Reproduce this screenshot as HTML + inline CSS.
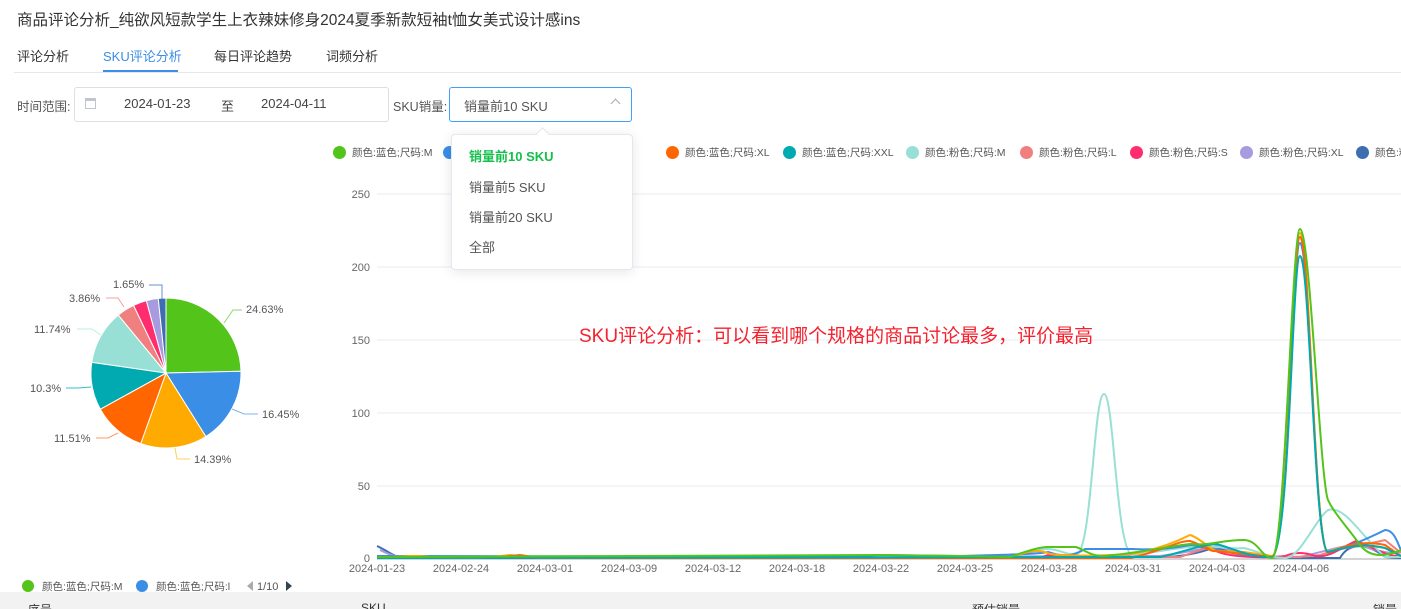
<!DOCTYPE html>
<html><head><meta charset="utf-8"><style>
*{margin:0;padding:0;box-sizing:border-box}
html,body{width:1401px;height:609px;overflow:hidden}
body{background:#fff;font-family:"Liberation Sans","Noto Sans CJK SC",sans-serif;color:#333;position:relative}
.a{position:absolute;white-space:nowrap}
.lg{position:absolute;top:145px;font-size:10.5px;color:#555;display:flex;align-items:center;white-space:nowrap}
.lg i{display:inline-block;width:13px;height:13px;border-radius:50%;margin-right:6px;flex:none}
</style></head><body>
<div class="a" style="left:17px;top:8px;font-size:15.5px;color:#333">商品评论分析_纯欲风短款学生上衣辣妹修身2024夏季新款短袖t恤女美式设计感ins</div>
<div class="a" style="left:17px;top:46px;font-size:13px;color:#333">评论分析</div>
<div class="a" style="left:103px;top:46px;font-size:13px;color:#3a8ee6">SKU评论分析</div>
<div class="a" style="left:214px;top:46px;font-size:13px;color:#333">每日评论趋势</div>
<div class="a" style="left:326px;top:46px;font-size:13px;color:#333">词频分析</div>
<div class="a" style="left:14px;top:72px;width:1387px;height:1px;background:#e4e7ed"></div>
<div class="a" style="left:103px;top:70px;width:75px;height:2px;background:#3a8ee6"></div>

<div class="a" style="left:17px;top:96px;font-size:12.5px;color:#555">时间范围:</div>
<div class="a" style="left:74px;top:87px;width:315px;height:35px;border:1px solid #dcdfe6;border-radius:3px"></div>
<div class="a" style="left:85px;top:98px;width:11px;height:11px;border:1px solid #c0c4cc;border-top-width:3px"></div>
<div class="a" style="left:124px;top:96px;font-size:13px;color:#444">2024-01-23</div>
<div class="a" style="left:221px;top:96px;font-size:13px;color:#444">至</div>
<div class="a" style="left:261px;top:96px;font-size:13px;color:#444">2024-04-11</div>
<div class="a" style="left:393px;top:96px;font-size:12.5px;color:#555">SKU销量:</div>
<div class="a" style="left:449px;top:87px;width:183px;height:35px;border:1px solid #409eff;border-radius:3px"></div>
<div class="a" style="left:464px;top:96px;font-size:13px;color:#555">销量前10 SKU</div>
<div class="a" style="left:612px;top:100px;width:7px;height:7px;border-left:1px solid #aaa;border-top:1px solid #aaa;transform:rotate(45deg)"></div>

<div class="lg" style="left:333px"><i style="background:#52c41a"></i>颜色:蓝色;尺码:M</div>
<div class="lg" style="left:443px"><i style="background:#3a8ee6"></i>颜色:蓝色;尺码:S</div>
<div class="lg" style="left:666px"><i style="background:#ff6600"></i>颜色:蓝色;尺码:XL</div>
<div class="lg" style="left:783px"><i style="background:#00aab0"></i>颜色:蓝色;尺码:XXL</div>
<div class="lg" style="left:906px"><i style="background:#98e0d5"></i>颜色:粉色;尺码:M</div>
<div class="lg" style="left:1020px"><i style="background:#f08080"></i>颜色:粉色;尺码:L</div>
<div class="lg" style="left:1130px"><i style="background:#ff2d6e"></i>颜色:粉色;尺码:S</div>
<div class="lg" style="left:1240px"><i style="background:#a89adf"></i>颜色:粉色;尺码:XL</div>
<div class="lg" style="left:1356px"><i style="background:#3d6fb0"></i>颜色:粉色;尺码:XXL</div>

<svg class="a" style="left:0;top:0" width="1401" height="609">
<g stroke="#e8ebf3" stroke-width="1">
<line x1="377" y1="194" x2="1401" y2="194"/><line x1="377" y1="267" x2="1401" y2="267"/><line x1="377" y1="340" x2="1401" y2="340"/><line x1="377" y1="413" x2="1401" y2="413"/><line x1="377" y1="486" x2="1401" y2="486"/>
</g>
<line x1="377" y1="559" x2="1401" y2="559" stroke="#aaa"/>
<g font-size="11" fill="#666" text-anchor="end" font-family="Liberation Sans">
<text x="370" y="198">250</text><text x="370" y="271">200</text><text x="370" y="344">150</text><text x="370" y="417">100</text><text x="370" y="490">50</text><text x="370" y="562">0</text>
</g>
<g font-size="11" fill="#666" text-anchor="middle" font-family="Liberation Sans">
<text x="377" y="572">2024-01-23</text><text x="461" y="572">2024-02-24</text><text x="545" y="572">2024-03-01</text><text x="629" y="572">2024-03-09</text><text x="713" y="572">2024-03-12</text><text x="797" y="572">2024-03-18</text><text x="881" y="572">2024-03-22</text><text x="965" y="572">2024-03-25</text><text x="1049" y="572">2024-03-28</text><text x="1133" y="572">2024-03-31</text><text x="1217" y="572">2024-04-03</text><text x="1301" y="572">2024-04-06</text>
</g>
<g fill="none" stroke-width="2" stroke-linejoin="round">
<path stroke="#3d6fb0" d="M377,546 C390,552 395,558 405,558 L1160,557 C1180,557 1200,553 1216,547 C1230,552 1250,558 1300,558 L1340,558 C1350,540 1370,545 1385,557 L1401,558"/>
<path stroke="#a89adf" d="M380,550 C392,556 400,558 410,558 L1160,556 C1190,552 1205,548 1216,546 C1240,553 1260,558 1300,557 C1330,550 1345,545 1356,545 C1372,548 1385,555 1401,552"/>
<path stroke="#f08080" d="M377,558 L1180,557 C1200,550 1210,546 1216,549 C1240,558 1300,558 1320,555 C1340,548 1360,546 1385,540 L1401,553"/>
<path stroke="#ff2d6e" d="M377,558 L700,558 L713,556 L730,558 L1040,558 L1048,555 L1060,558 L1130,558 C1150,552 1170,546 1190,546 C1205,546 1210,550 1216,551 C1230,558 1270,558 1285,556 C1295,552 1305,552 1315,556 C1330,558 1340,548 1356,541 C1370,545 1385,557 1401,556"/>
<path stroke="#98e0d5" d="M377,556 L1010,557 C1030,550 1040,549 1048,549 C1060,549 1070,557 1078,554 C1092,540 1094,394 1104,394 C1114,394 1116,550 1132,555 C1150,553 1170,549 1190,547 C1210,544 1230,550 1244,548 C1260,552 1270,558 1285,558 C1300,558 1315,520 1328,510 C1345,505 1360,535 1385,557 L1401,557"/>
<path stroke="#3a8ee6" d="M377,556 L840,557 L881,555 L960,556 C1000,555 1040,554 1048,552 C1060,556 1070,558 1085,549 L1132,549 C1150,550 1170,549 1190,545 C1205,546 1215,550 1244,555 L1272,557 C1290,550 1292,243 1300,243 C1310,243 1314,550 1328,552 C1345,548 1365,540 1385,530 C1395,530 1398,545 1401,550"/>
<path stroke="#ffaa00" d="M377,558 L410,556 L420,556 L440,558 L480,558 L510,555 L540,558 L1010,558 C1030,550 1040,549 1050,554 C1070,556 1100,556 1132,554 C1160,549 1180,540 1190,535 C1200,538 1210,549 1216,551 L1244,552 L1272,556 C1290,550 1292,233 1300,233 C1310,233 1314,548 1328,552 C1345,545 1360,544 1385,548 L1401,556"/>
<path stroke="#ff6600" d="M377,558 L500,557 L520,555 L540,558 L1130,558 C1160,552 1180,540 1190,541 C1205,546 1210,552 1216,551 L1272,557 C1290,550 1292,237 1300,237 C1310,237 1314,550 1328,553 C1345,546 1360,540 1385,545 L1401,556"/>
<path stroke="#00aab0" d="M377,558 L1160,557 C1180,553 1200,545 1216,544 C1230,547 1250,558 1272,557 C1290,550 1292,256 1300,256 C1310,256 1314,548 1328,552 C1345,548 1360,542 1385,548 L1401,556"/>
<path stroke="#52c41a" d="M377,557 L880,555 L960,556 L1010,557 C1030,550 1040,547 1048,547 L1076,547 C1085,550 1090,556 1104,556 C1140,553 1170,546 1190,544 C1210,546 1220,540 1244,540 C1258,540 1262,558 1272,558 C1285,558 1292,229 1300,229 C1310,229 1320,480 1328,500 C1335,515 1350,530 1360,545 C1370,558 1385,557 1401,550"/>
</g>
<g stroke="#fff" stroke-width="1">
<path fill="#52c41a" d="M166,373 L166,298 A75,75 0 0 1 240.98,371.26 Z"/>
<path fill="#3a8ee6" d="M166,373 L240.98,371.26 A75,75 0 0 1 205.86,436.53 Z"/>
<path fill="#ffaa00" d="M166,373 L205.86,436.53 A75,75 0 0 1 140.73,443.61 Z"/>
<path fill="#ff6600" d="M166,373 L140.73,443.61 A75,75 0 0 1 100.32,409.21 Z"/>
<path fill="#00aab0" d="M166,373 L100.32,409.21 A75,75 0 0 1 91.77,362.29 Z"/>
<path fill="#98e0d5" d="M166,373 L91.77,362.29 A75,75 0 0 1 118.28,315.13 Z"/>
<path fill="#f08080" d="M166,373 L118.28,315.13 A75,75 0 0 1 133.56,305.38 Z"/>
<path fill="#ff2d6e" d="M166,373 L133.56,305.38 A75,75 0 0 1 146.35,300.62 Z"/>
<path fill="#a89adf" d="M166,373 L146.35,300.62 A75,75 0 0 1 158.24,298.40 Z"/>
<path fill="#3d6fb0" d="M166,373 L158.24,298.40 A75,75 0 0 1 166,298 Z"/>
</g>
<g fill="none" stroke-width="1">
<polyline stroke="#8fd66a" points="224,323 233,310 242,310"/>
<polyline stroke="#7db4f0" points="232,409 244,414 258,414"/>
<polyline stroke="#ffcc66" points="175,448 177,459 190,459"/>
<polyline stroke="#ff9966" points="118,433 108,438 96,438"/>
<polyline stroke="#33c0c4" points="91,387 78,388 66,388"/>
<polyline stroke="#bdeee6" points="101,335 92,329 77,329"/>
<polyline stroke="#f5a0a0" points="124,307 118,298 106,298"/>
<polyline stroke="#6a8fcc" points="162,299 162,285 149,285"/>
</g>
<g font-size="11" fill="#555" font-family="Liberation Sans">
<text x="246" y="313">24.63%</text><text x="262" y="418">16.45%</text><text x="194" y="463">14.39%</text><text x="54" y="442">11.51%</text><text x="30" y="392">10.3%</text><text x="34" y="333">11.74%</text><text x="69" y="302">3.86%</text><text x="113" y="288">1.65%</text>
</g>
<circle cx="28" cy="586" r="6" fill="#52c41a"/>
<text x="42" y="590" font-size="10.5" fill="#555">颜色:蓝色;尺码:M</text>
<circle cx="142" cy="586" r="6" fill="#3a8ee6"/>
<text x="156" y="590" font-size="10.5" fill="#555">颜色:蓝色;尺码:l</text>
<path d="M247,586 L253,581 L253,591 Z" fill="#aaa"/>
<text x="257" y="590" font-size="11" fill="#555">1/10</text>
<path d="M286,581 L292,586 L286,591 Z" fill="#2f4554"/>
</svg>

<div class="a" style="left:579px;top:321px;font-size:19px;color:#f5222d">SKU评论分析：可以看到哪个规格的商品讨论最多，评价最高</div>

<div class="a" style="left:0;top:592px;width:1401px;height:17px;background:#f2f2f2;overflow:hidden">
<div class="a" style="left:28px;top:9px;font-size:12px;color:#333">序号</div>
<div class="a" style="left:361px;top:9px;font-size:12px;color:#333">SKU</div>
<div class="a" style="left:972px;top:9px;font-size:12px;color:#333">预估销量</div>
<div class="a" style="left:1373px;top:9px;font-size:12px;color:#333">销量</div>
</div>

<div class="a" style="left:451px;top:134px;width:182px;height:136px;background:#fff;border:1px solid #e4e7ed;border-radius:4px;box-shadow:0 2px 12px rgba(0,0,0,.1)"></div>
<div class="a" style="left:538px;top:129px;width:9px;height:9px;background:#fff;border-left:1px solid #e4e7ed;border-top:1px solid #e4e7ed;transform:rotate(45deg)"></div>
<div class="a" style="left:469px;top:146px;font-size:13px;color:#13c04a;font-weight:bold">销量前10 SKU</div>
<div class="a" style="left:469px;top:177px;font-size:13px;color:#555">销量前5 SKU</div>
<div class="a" style="left:469px;top:207px;font-size:13px;color:#555">销量前20 SKU</div>
<div class="a" style="left:469px;top:237px;font-size:13px;color:#555">全部</div>
</body></html>
